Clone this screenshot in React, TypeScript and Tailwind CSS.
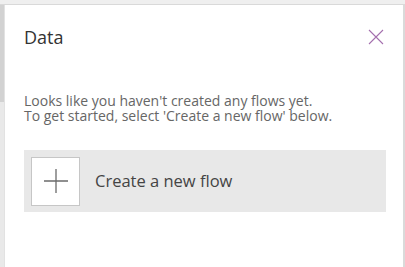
export default function App() {
  return (
    <div
      className="w-[405px] h-[267px] flex flex-col bg-white overflow-hidden"
      style={{ fontFamily: '"Open Sans", "Noto Sans", sans-serif' }}
    >
      <div className="h-[5px] bg-[#efefef] border-b border-[#d9d9d9]" />
      <div className="flex flex-1">
        <div className="w-[5px] flex flex-col border-r border-[#e2e2e2]">
          <div className="h-[97px] bg-[#d2d2d2]" />
          <div className="flex-1 bg-[#e9e9e9]" />
        </div>
        <div className="flex-1 flex flex-col">
          <div className="flex items-start justify-between pl-[19px] pr-[19px] pt-[20px]">
            <h1 className="text-[18px] leading-[24px] text-[#333333]">Data</h1>
            <button className="mt-[4px] w-[16px] h-[16px] flex items-center justify-center">
              <svg width="16" height="16" viewBox="0 0 16 16">
                <path d="M1 1 L15 15 M15 1 L1 15" stroke="#a46fae" strokeWidth="1.1" fill="none" />
              </svg>
            </button>
          </div>
          <div className="pl-[19px] pt-[44px] text-[14px] leading-[15px] text-[#666666]">
            <p>Looks like you haven't created any flows yet.</p>
            <p>To get started, select 'Create a new flow' below.</p>
          </div>
          <div className="ml-[19px] mr-[17px] mt-[27px] h-[62px] bg-[#e8e8e8] flex items-center pl-[7px]">
            <div className="w-[49px] h-[49px] bg-white border border-[#c6c6c6] flex items-center justify-center">
              <svg width="24" height="24" viewBox="0 0 24 24">
                <path d="M0 12 H24 M12 0 V24" stroke="#6b6b6b" strokeWidth="1.3" fill="none" />
              </svg>
            </div>
            <span className="ml-[15px] text-[16.5px] text-[#444444]">Create a new flow</span>
          </div>
        </div>
        <div className="w-[2px] bg-[#dadada]" />
      </div>
    </div>
  );
}
